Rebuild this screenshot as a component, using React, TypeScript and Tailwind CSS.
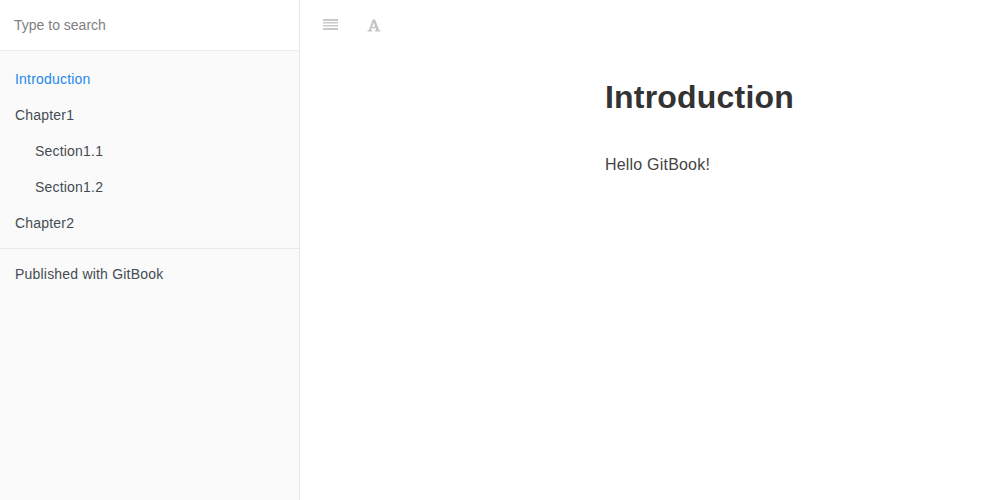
export default function App() {
  const items: string[] = ["Section1.1", "Section1.2"];
  return (
    <div className="flex h-[500px] w-[1000px] overflow-hidden bg-white font-['Liberation_Sans',Arial,sans-serif] tracking-[0.2px] text-[#333333]">
      <aside className="flex w-[300px] shrink-0 flex-col border-r border-[rgba(0,0,0,0.07)] bg-[#fafafa]">
        <div className="flex h-[51px] shrink-0 items-center border-b border-[rgba(0,0,0,0.07)] bg-white pl-[14px] text-[14px] tracking-normal text-[#808080]">
          Type to search
        </div>
        <nav className="flex flex-col pt-[10px] text-[14px] leading-[16px] text-[#444c52]">
          <div className="py-[10px] pl-[15px] text-[#2389ea]">Introduction</div>
          <div className="py-[10px] pl-[15px]">Chapter1</div>
          {items.map((t) => (
            <div key={t} className="py-[10px] pl-[35px]">{t}</div>
          ))}
          <div className="py-[10px] pl-[15px]">Chapter2</div>
          <div className="mt-[7px] border-t border-[rgba(0,0,0,0.07)] pt-[17px] pl-[15px]">Published with GitBook</div>
        </nav>
      </aside>
      <main className="flex min-w-0 flex-1 flex-col">
        <div className="flex h-[50px] shrink-0 items-center">
          <svg className="ml-[23px]" width="15" height="12" viewBox="0 0 15 12" fill="#c9c9c9">
            <rect x="0" y="0" width="15" height="2" />
            <rect x="0" y="3" width="15" height="1.5" />
            <rect x="0" y="6" width="15" height="1.5" />
            <rect x="0" y="9" width="15" height="2" />
          </svg>
          <svg className="ml-[29px]" width="14" height="13" viewBox="0 0 14 13" fill="#c4c4c4">
            <path d="M5.6 0.5H8.2L12 11L13.5 11.6V12.6H7.9V11.6L9.2 11.2L8.6 9.2H4.6L3.9 11.2L5.2 11.6V12.6H0.5V11.6L2 11ZM6.6 3.6L5.1 7.8H8.1Z" />
          </svg>
        </div>
        <article className="pl-[305px]">
          <h1 className="mt-[27px] text-[32px] font-bold leading-[40px] text-[#333333]">Introduction</h1>
          <p className="mt-[38px] text-[16px] leading-[20px] text-[#444444]">Hello GitBook!</p>
        </article>
      </main>
    </div>
  );
}
